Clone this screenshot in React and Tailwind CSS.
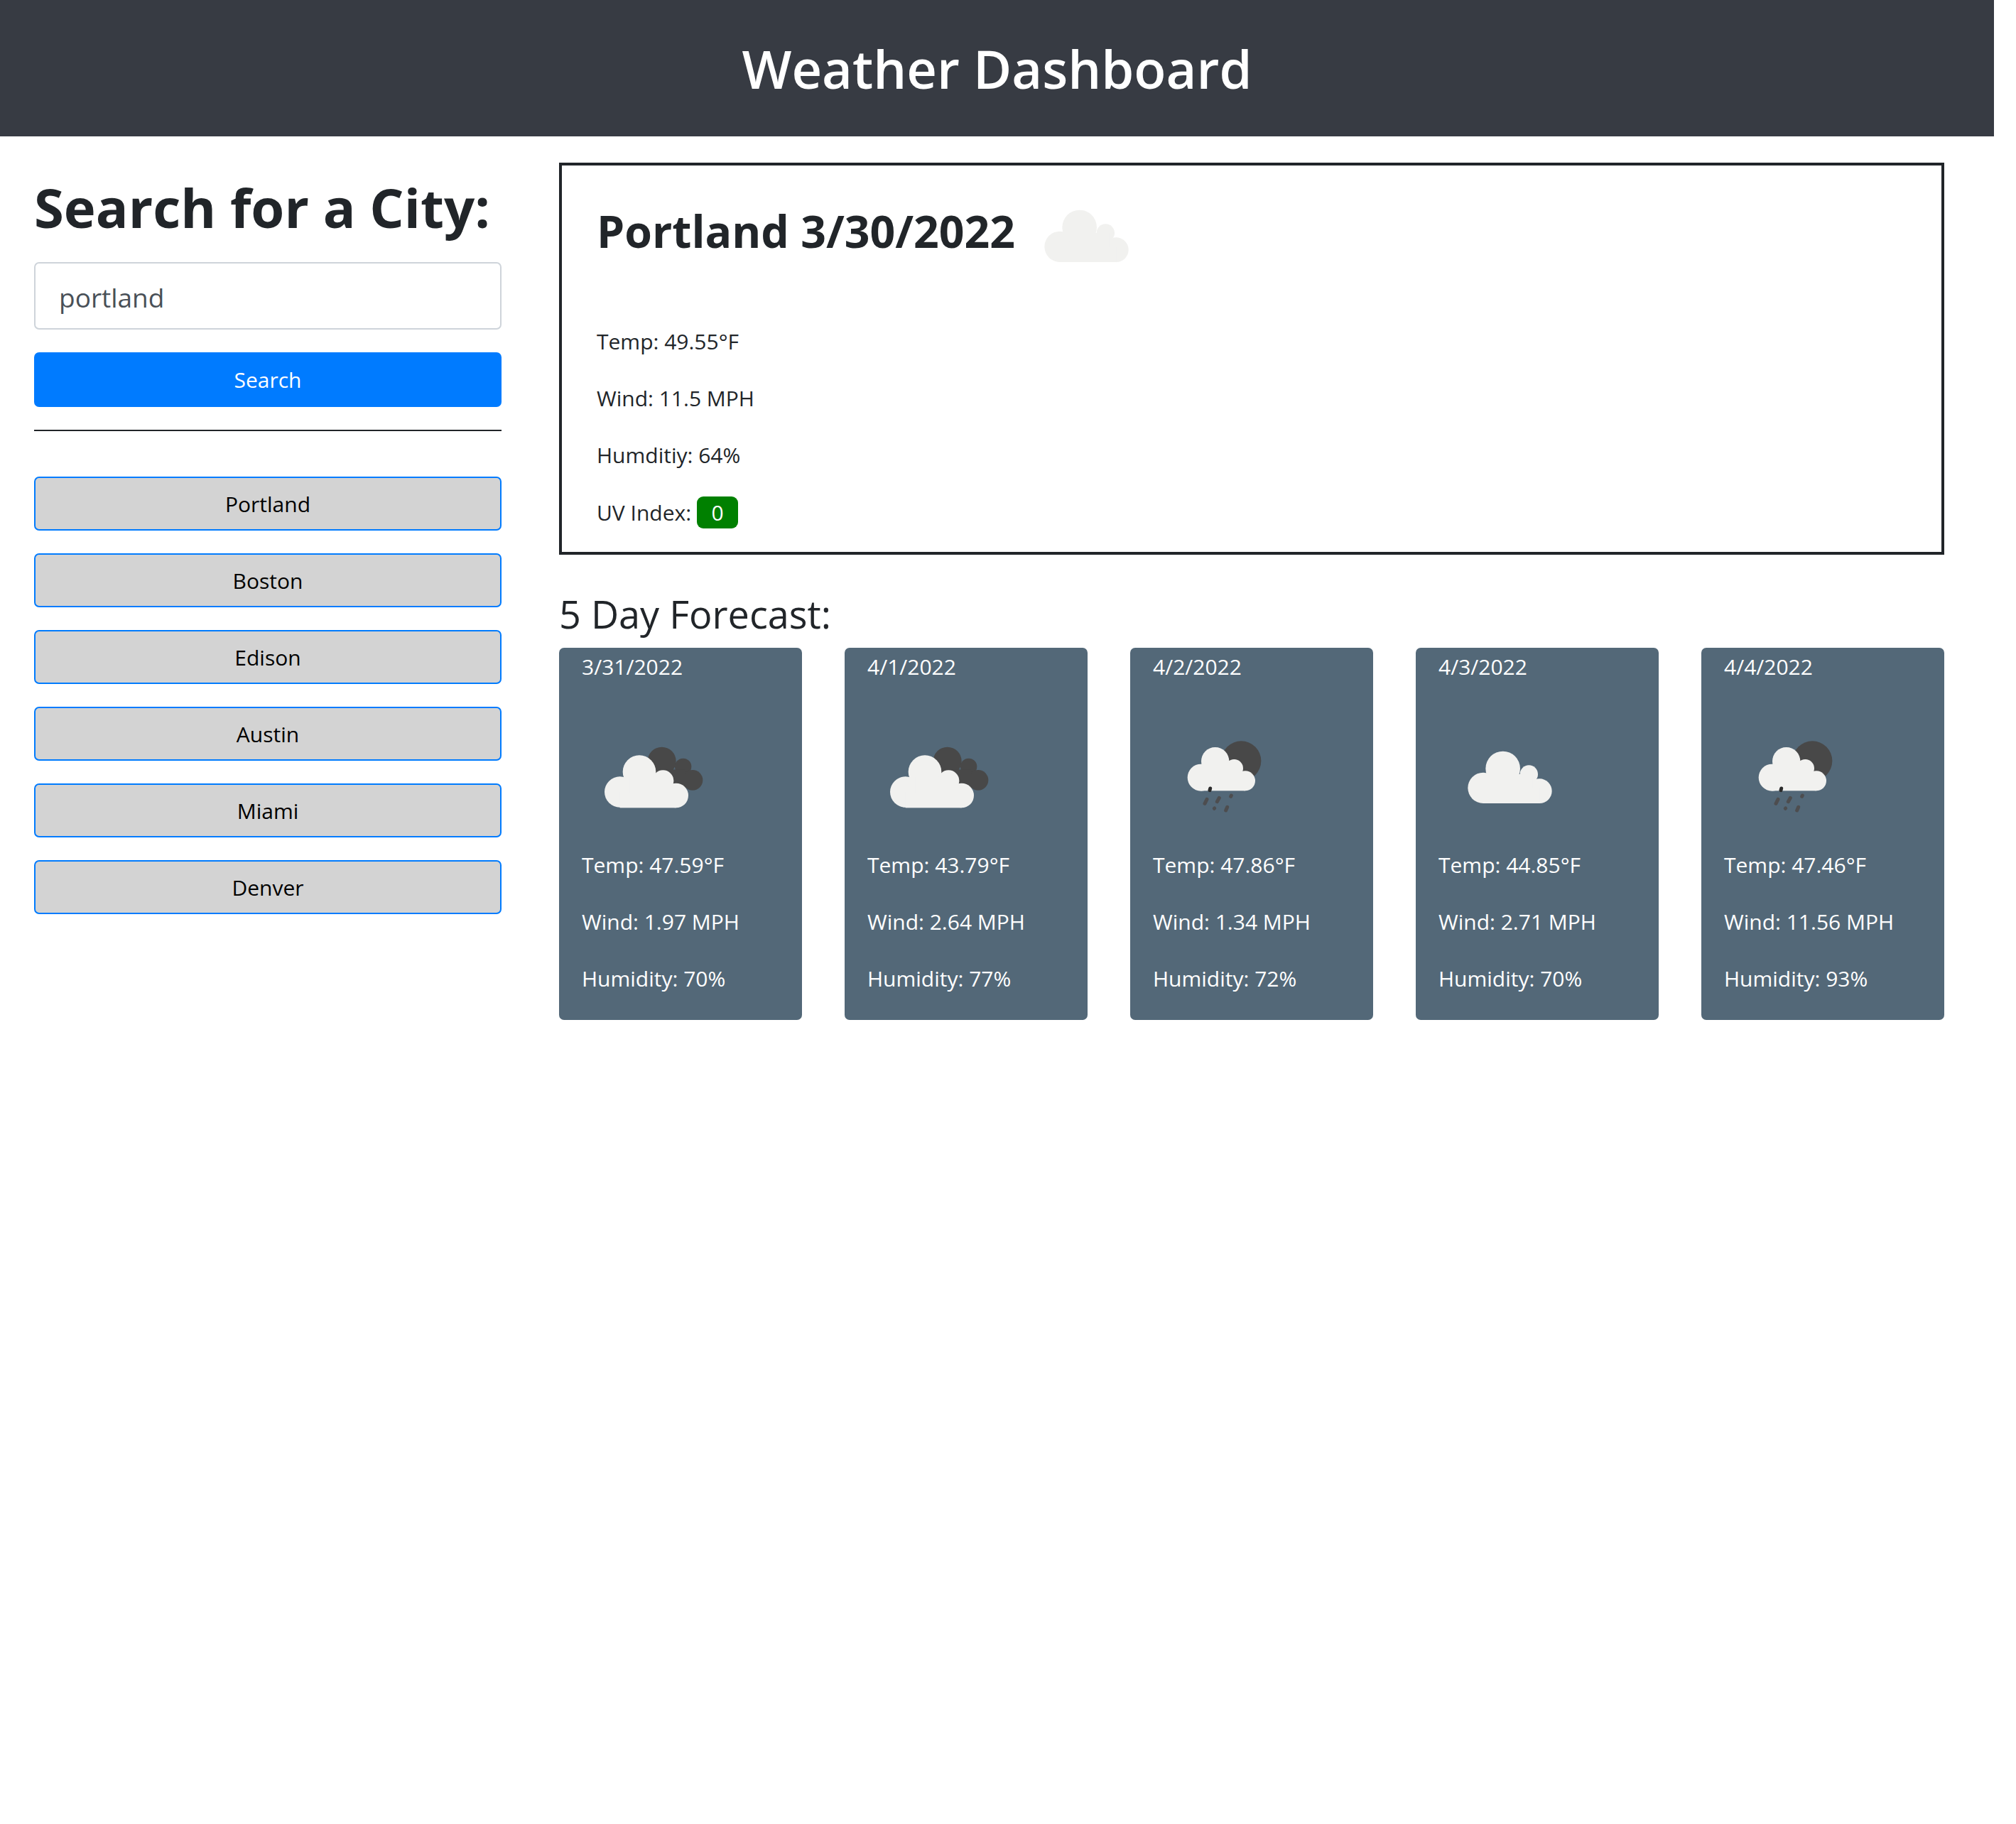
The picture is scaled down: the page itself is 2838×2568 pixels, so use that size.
const cities = ["Portland", "Boston", "Edison", "Austin", "Miami", "Denver"];

const forecast = [
  { date: "3/31/2022", icon: "broken", temp: "47.59", wind: "1.97", humidity: "70" },
  { date: "4/1/2022", icon: "broken", temp: "43.79", wind: "2.64", humidity: "77" },
  { date: "4/2/2022", icon: "rain", temp: "47.86", wind: "1.34", humidity: "72" },
  { date: "4/3/2022", icon: "cloud", temp: "44.85", wind: "2.71", humidity: "70" },
  { date: "4/4/2022", icon: "rain", temp: "47.46", wind: "11.56", humidity: "93" },
];

const font = { fontFamily: '"Open Sans", sans-serif' };

function PlainCloud({ dx = 0, dy = 0 }) {
  return (
    <g transform={`translate(${dx} ${dy})`} fill="#f1f1ef">
      <circle cx="147" cy="238" r="65" />
      <circle cx="230" cy="156" r="73" />
      <circle cx="340" cy="180" r="38" />
      <circle cx="385" cy="251" r="52" />
      <rect x="147" y="238" width="238" height="65" />
      <rect x="190" y="180" width="165" height="60" />
    </g>
  );
}

function WeatherIcon({ kind }) {
  return (
    <svg className="block w-[200px] h-[160px] ml-[32px]" viewBox="0 0 600 480">
      {kind === "cloud" && <PlainCloud dx={42} dy={30} />}
      {kind === "broken" && (
        <g transform="translate(3 30)">
          <g fill="#484848">
            <circle cx="335" cy="125" r="60" />
            <circle cx="425" cy="148" r="35" />
            <circle cx="465" cy="205" r="43" />
            <rect x="340" y="160" width="95" height="85" />
          </g>
          <g fill="#f1f1ef">
            <circle cx="158" cy="255" r="65" />
            <circle cx="240" cy="170" r="70" />
            <circle cx="340" cy="208" r="45" />
            <circle cx="395" cy="270" r="52" />
            <rect x="158" y="255" width="237" height="67" />
            <rect x="200" y="190" width="160" height="70" />
          </g>
        </g>
      )}
      {kind === "rain" && (
        <g transform="translate(48 0)">
          <circle cx="325" cy="154" r="84" fill="#484848" />
          <g fill="#f1f1ef">
            <circle cx="155" cy="224" r="57" />
            <circle cx="215" cy="155" r="59" />
            <circle cx="295" cy="185" r="38" />
            <circle cx="342" cy="238" r="42" />
            <rect x="155" y="238" width="187" height="42" />
            <rect x="190" y="175" width="125" height="65" />
          </g>
          <g stroke="#4d4d4f" strokeWidth="15" strokeLinecap="round">
            <path d="M194 270L192 278" stroke="#2b2b2b" />
            <path d="M180 316L171 334" />
            <path d="M232 310L223 326" />
            <path d="M283 300L281 304" />
            <path d="M212 354L211 355" />
            <path d="M266 349L260 363" />
          </g>
        </g>
      )}
    </svg>
  );
}

export default function App() {
  return (
    <div className="w-[2807px] min-h-[2568px] bg-white text-[#212529] text-[30px]" style={font}>
      <header className="h-[192px] bg-[#373b43] flex items-center justify-center pt-[2px]">
        <h1 className="text-[74px] font-semibold text-white leading-none">Weather Dashboard</h1>
      </header>

      <main className="flex pl-[48px] pr-[70px] pt-[37px] gap-[81px]">
        <aside className="w-[658px] shrink-0">
          <h2 className="text-[76px] font-bold leading-[90px] mb-[32px] mt-[18px]">Search for a City:</h2>
          <input
            defaultValue="portland"
            className="block w-full h-[95px] px-[33px] pt-[3px] border-2 border-[#ced4da] rounded-[7px] text-[37px] text-[#495057] bg-white outline-none"
          />
          <button className="block w-full h-[77px] mt-[32px] rounded-[7px] bg-[#007bff] text-white">Search</button>
          <hr className="mt-[32px] mb-[64px] border-t-2 border-[#212529]" />
          <div className="flex flex-col gap-[32px]">
            {cities.map((city) => (
              <button key={city} className="block w-full h-[76px] rounded-[7px] bg-[#d3d3d3] border-2 border-[#007bff] text-black">
                {city}
              </button>
            ))}
          </div>
        </aside>

        <section className="flex-1">
          <div className="h-[552px] border-4 border-[#212529] pl-[49px] pt-[25px]">
            <div className="flex items-start h-[201px]">
              <h2 className="text-[62.5px] font-bold leading-[70px] mt-[32px]">Portland 3/30/2022</h2>
              <svg className="block w-[200px] h-[150px] ml-[14px]" viewBox="0 0 600 450">
                <PlainCloud dx={0} dy={30} />
              </svg>
            </div>
            <div className="flex flex-col gap-[36px] leading-[44px]">
              <p>Temp: 49.55°F</p>
              <p>Wind: 11.5 MPH</p>
              <p>Humditiy: 64%</p>
              <p className="flex items-center gap-[8px]">
                UV Index:
                <span className="w-[58px] h-[45px] rounded-[9px] bg-[#008000] text-white flex items-center justify-center">0</span>
              </p>
            </div>
          </div>

          <h3 className="text-[54px] font-medium leading-[62px] mt-[52px]">5 Day Forecast:</h3>

          <div className="grid grid-cols-5 gap-[60px] mt-[17px]">
            {forecast.map((day) => (
              <div key={day.date} className="h-[524px] rounded-[7px] bg-[#536878] text-white">
                <p className="pl-[32px] pt-[5px] leading-[44px]">{day.date}</p>
                <div className="mt-[59px]">
                  <WeatherIcon kind={day.icon} />
                </div>
                <div className="flex flex-col gap-[36px] leading-[44px] pl-[32px] mt-[16px]">
                  <p>Temp: {day.temp}°F</p>
                  <p>Wind: {day.wind} MPH</p>
                  <p>Humidity: {day.humidity}%</p>
                </div>
              </div>
            ))}
          </div>
        </section>
      </main>
    </div>
  );
}
